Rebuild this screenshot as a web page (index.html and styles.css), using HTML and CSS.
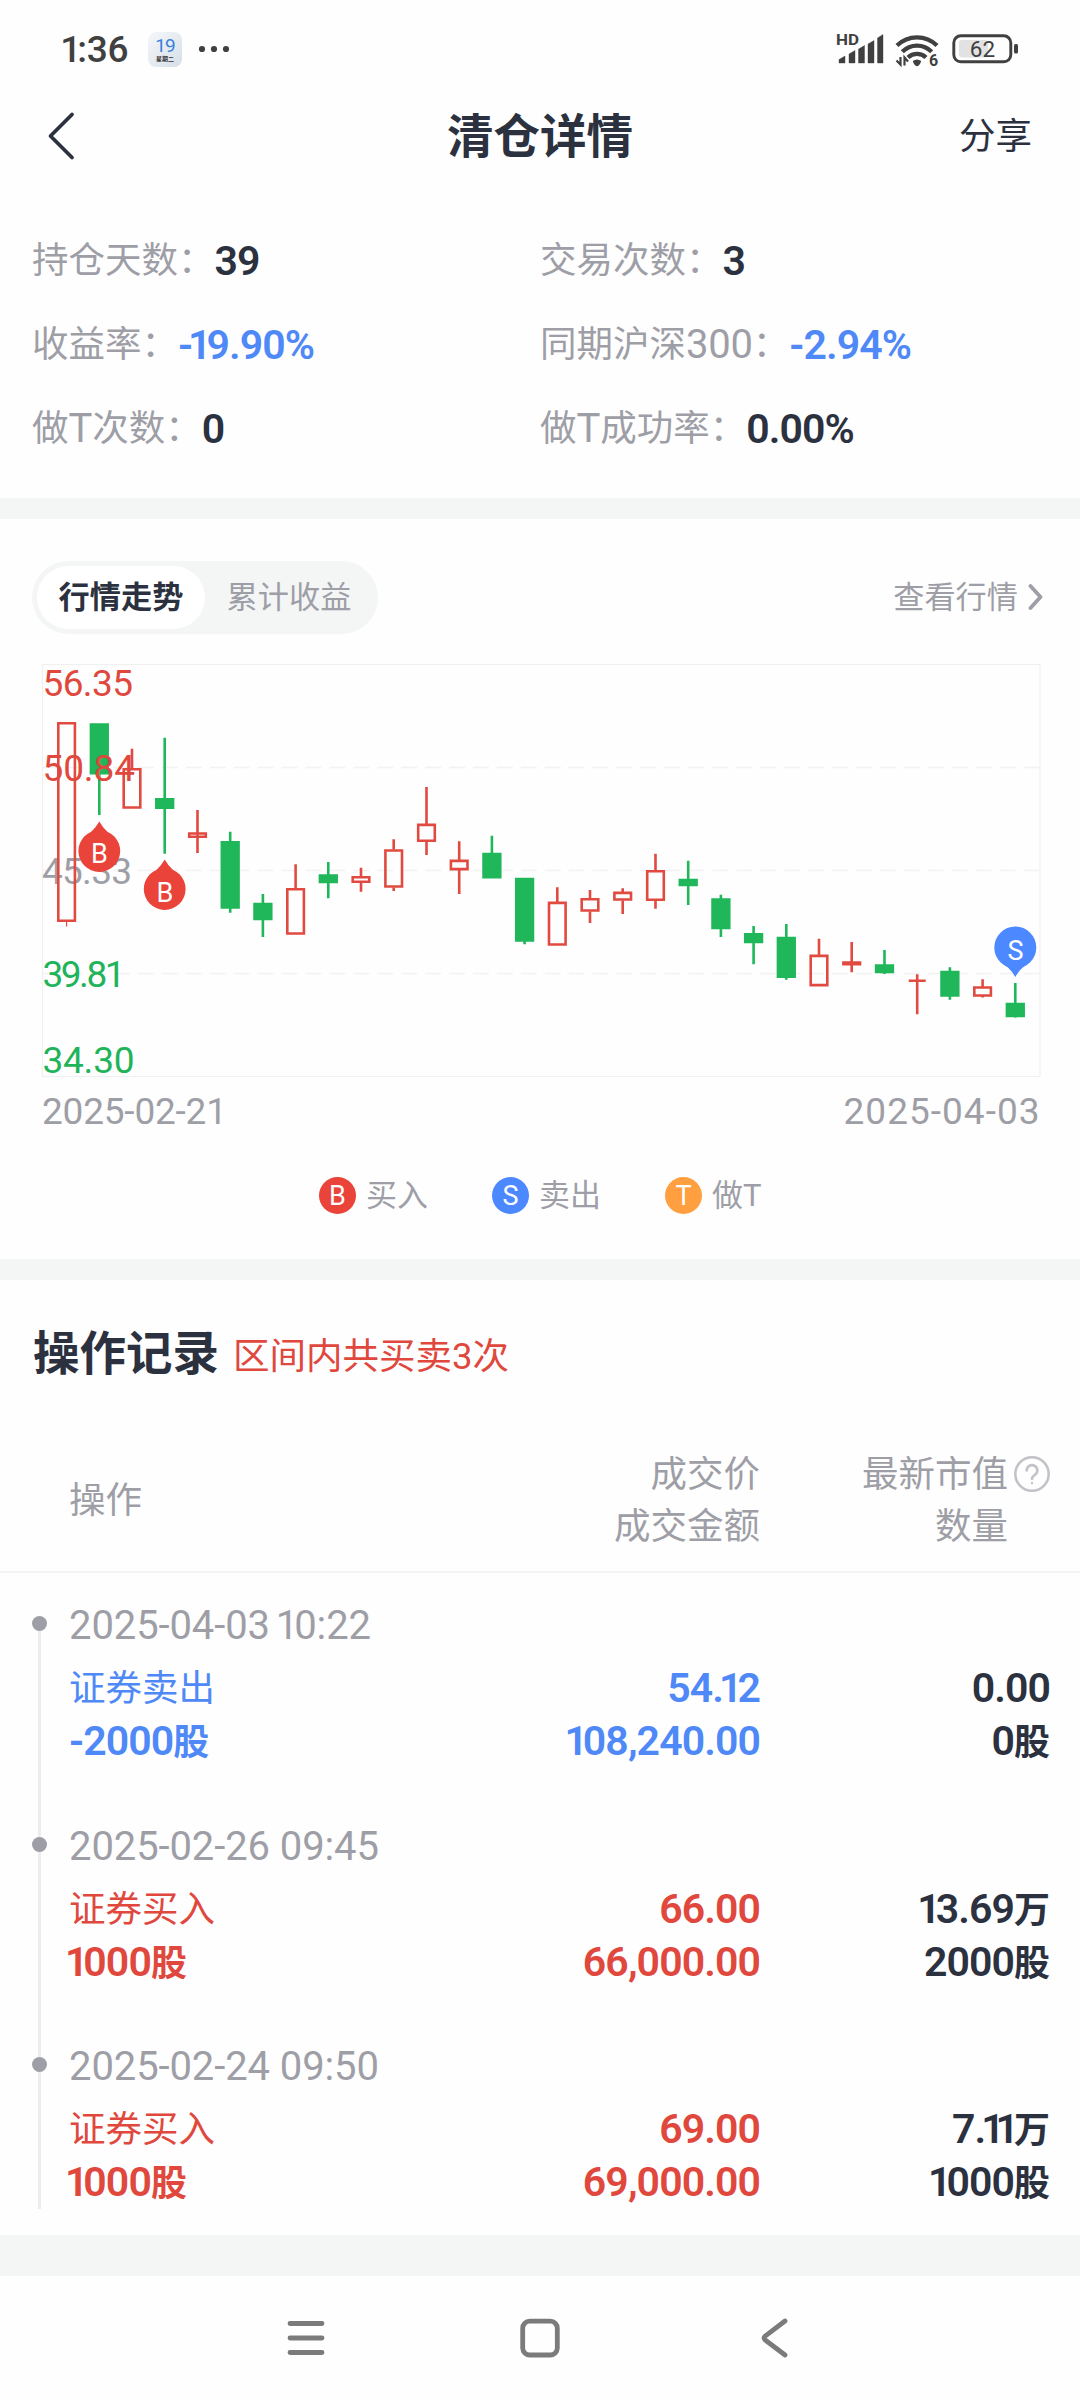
FILE: index.html
```html
<!DOCTYPE html>
<html lang="zh-CN">
<head>
<meta charset="utf-8">
<title>清仓详情</title>
<link rel="stylesheet" href="styles.css">
</head>
<body>
<div class="statusbar">
  <span class="clock"><span class="one">1</span>:36</span>
  <span class="cal"><b class="cal-day">19</b><i class="cal-week">星期二</i></span>
  <svg class="dots" width="32" height="8" viewBox="0 0 32 8"><circle cx="4" cy="4" r="3.1"/><circle cx="16" cy="4" r="3.1"/><circle cx="28" cy="4" r="3.1"/></svg>
  <svg class="sys" width="186" height="40" viewBox="834 30 186 40">
    <text x="836" y="46.3" font-size="15.500" font-weight="700" textLength="23" lengthAdjust="spacingAndGlyphs">HD</text>
    <path d="M839 64v-3.500l6-3.500v7zM849 64v-9l6-3.500v12.500zM858.500 64v-14l6-3.500v17.500zM868 64v-19l6-3.500v22.500zM877.500 64v-25l5.500-3.500v28.500z" stroke="#404040" stroke-width=".4" stroke-linejoin="round"/>
    <g fill="none" stroke="#404040" stroke-width="4.300">
      <path d="M897 46.500a28.500 28.500 0 0 1 40 0"/><path d="M902.300 52.800a20.500 20.500 0 0 1 29.400 0"/><path d="M908 58.500a13 13 0 0 1 18 0"/>
    </g>
    <path d="M912.800 62q4.200-3.200 8.400 0q-1.200 4.500-4.200 5.300q-3-.8-4.200-5.300z"/>
    <path d="M900.500 58v7.500l-4-4M904.500 66.500v-8l3.500 4" fill="none" stroke="#404040" stroke-width="2.200"/>
    <text x="929" y="66.500" font-size="16" font-weight="700">6</text>
    <rect x="953.800" y="36.800" width="57" height="26" rx="7" fill="none" stroke="#404040" stroke-width="2.900"/>
    <rect x="959" y="41" width="29" height="17.500" rx="3" fill="#e2e2e2"/>
    <rect x="1014" y="45" width="4" height="9.500" rx="1.500"/>
    <text x="982.500" y="57.500" font-size="22.500" text-anchor="middle">62</text>
  </svg>
</div>
<header class="titlebar">
  <svg class="back" width="30" height="50" viewBox="0 0 30 50"><path d="M27 3.500L5.500 25L27 46.500"/></svg>
  <h1>清仓详情</h1>
  <span class="share">分享</span>
</header>

<section class="stats">
  <div class="stat">持仓天数：<b>39</b></div>
  <div class="stat">交易次数：<b>3</b></div>
  <div class="stat">收益率：<b class="blue">-<span class="one">1</span>9.90%</b></div>
  <div class="stat">同期沪深<span class="n">300</span>：<b class="blue">-2.94%</b></div>
  <div class="stat">做<span class="n">T</span>次数：<b>0</b></div>
  <div class="stat">做<span class="n">T</span>成功率：<b>0.00%</b></div>
</section>

<section class="trend">
  <div class="trend-head">
    <div class="tabs"><span class="tab on">行情走势</span><span class="tab">累计收益</span></div>
    <a class="more">查看行情<svg width="16" height="28" viewBox="0 0 16 28"><path d="M2.500 3L12.500 14L2.500 25"/></svg></a>
  </div>
  <svg class="chart" width="1080" height="490" viewBox="0 650 1080 490">
    <rect x="42.500" y="664.500" width="997.500" height="412" fill="none" stroke="#f0f0f1" stroke-width="1.200"/>
    <path d="M42 767.500H1040M42 870.500H1040M42 973.500H1040" stroke="#f2f2f3" stroke-width="1.600" stroke-dasharray="16 7.940"/>
    <text class="gray" x="42" y="884" textLength="90">45.33</text>
    <g stroke="#1fb75a" fill="none">
      <path stroke-width="2.600" d="M99.300 774V815M164.700 737.700V853.700M230.200 831.700V912.700M262.900 894V937M328.300 862V898.300M491.900 835.700V870M524.600 930V944.300M688.200 860.700V905M720.900 894.700V937M753.600 926V964.300M786.300 924V979.700M884.500 950V974M949.900 967.300V999.700M1015.300 983V1017.600"/>
      <path stroke-width="19.300" d="M99.300 723.300V774.500M164.700 798V809M230.200 841V908.700M262.900 902.700V920.300M328.300 874.300V883.300M491.900 852.700V878.500M524.600 877.700V941.700M688.200 878.700V886.300M720.900 898.300V929.300M753.600 933V943.300M786.300 936.700V978M884.500 964.300V973.300M949.900 970.700V996.700M1015.300 1002.700V1017.300"/>
    </g>
    <g stroke="#e04a40" stroke-width="2.600" fill="none">
      <path d="M132 748.700V768M197.500 810V853M295.600 864.300V888M361 867.700V876M361 883V891.700M393.700 839.300V849.500M393.700 887.500V891M426.500 787V824M426.500 842V855M459.200 841.300V860M459.200 870V894M557.300 887.300V902M590 890V898M590 911.500V923M622.700 888.300V892M622.700 900.500V914M655.500 853.700V870M655.500 901V908.700M819 938.700V955M851.700 942V972.300M917.200 974.300V1014.300M908.700 980.700H925.700M982.600 979.300V987M982.600 996V997.500"/>
      <path stroke-width="1.200" d="M66.600 922V926.500"/>
      <path d="M58.300 723.200h16.600v197.600h-16.600zM123.700 769.200h16.600v38.300h-16.600zM189.200 833.500h16.600v3.300h-16.600zM287.300 889.200h16.600v44.300h-16.600zM352.700 877.200h16.600v4.600h-16.600zM385.400 850.500h16.600v36h-16.600zM418.200 824.900h16.600v15.900h-16.600zM450.900 860.900h16.600v8.200h-16.600zM549 902.900h16.600v41.600h-16.600zM581.700 899.200h16.600v11.300h-16.600zM614.400 892.900h16.600v6.600h-16.600zM647.200 871.200h16.600v28.600h-16.600zM810.700 955.900h16.600v29.200h-16.600zM843.400 962.500h16.600v1.600h-16.600zM974.300 987.500h16.600v8h-16.600z"/>
    </g>
    <text class="red" x="42.500" y="696" textLength="90.500">56.35</text>
    <text class="red" x="42.500" y="781" textLength="92.500">50.84</text>
    <text class="green" x="42.500" y="986.500" textLength="83">39.81</text>
    <text class="green" x="42.500" y="1073" textLength="92">34.30</text>
    <g fill="#ea4339">
      <circle cx="99.300" cy="851" r="20.900"/><path d="M99.300 821.500q3 5.500 8.700 11h-17.400q5.700-5.500 8.700-11z"/>
      <circle cx="164.700" cy="889" r="20.900"/><path d="M164.700 859.500q3 5.500 8.700 11h-17.400q5.700-5.500 8.700-11z"/>
    </g>
    <g fill="#4c88ff"><circle cx="1015.300" cy="947.500" r="21"/><path d="M1015.300 977q3-5.500 8.700-11h-17.400q5.700 5.500 8.700 11z"/></g>
    <text class="pin" x="99.500" y="863">B</text>
    <text class="pin" x="165" y="902">B</text>
    <text class="pin" x="1015.500" y="960">S</text>
    <text class="gray" x="42" y="1124" textLength="185">2025-02-21</text>
    <text class="gray" x="843.500" y="1124" textLength="196">2025-04-03</text>
  </svg>
  <div class="legend">
    <span class="key"><i class="dot buy">B</i>买入</span>
    <span class="key"><i class="dot sell">S</i>卖出</span>
    <span class="key"><i class="dot tt">T</i>做T</span>
  </div>
</section>

<section class="records">
  <div class="rec-title"><h2>操作记录</h2><span>区间内共买卖3次</span></div>
  <div class="thead">
    <div class="c1">操作</div>
    <div class="c2"><div>成交价</div><div>成交金额</div></div>
    <div class="c3 h3"><div>最新市值</div><div>数量</div>
      <svg class="help" width="38" height="38" viewBox="0 0 38 38"><circle cx="19" cy="19" r="16.700"/><path d="M13.700 15.500a5.300 5.300 0 1 1 8.300 4.300q-3 2-3 4.200"/><circle cx="19" cy="28" r="1.200" class="pt"/></svg></div>
  </div>
  <div class="timeline">
    <article class="rec">
      <time>2025-04-03 <span class="one">1</span>0:22</time>
      <div class="row"><div class="c1 blue"><div>证券卖出</div><b>-2000<i>股</i></b></div><div class="c2 blue"><b>54.<span class="one">1</span>2</b><b><span class="one">1</span>08,240.00</b></div><div class="c3"><b>0.00</b><b>0<i>股</i></b></div></div>
    </article>
    <article class="rec">
      <time>2025-02-26 09:45</time>
      <div class="row"><div class="c1 red"><div>证券买入</div><b><span class="one">1</span>000<i>股</i></b></div><div class="c2 red"><b>66.00</b><b>66,000.00</b></div><div class="c3"><b><span class="one">1</span>3.69<i>万</i></b><b>2000<i>股</i></b></div></div>
    </article>
    <article class="rec">
      <time>2025-02-24 09:50</time>
      <div class="row"><div class="c1 red"><div>证券买入</div><b><span class="one">1</span>000<i>股</i></b></div><div class="c2 red"><b>69.00</b><b>69,000.00</b></div><div class="c3"><b>7.<span class="one">1</span><span class="one">1</span><i>万</i></b><b><span class="one">1</span>000<i>股</i></b></div></div>
    </article>
  </div>
</section>

<nav class="sysnav">
  <svg width="40" height="44" viewBox="0 0 40 44"><path d="M4 7.500H36M4 22H36M4 36.500H36"/></svg>
  <svg width="44" height="44" viewBox="0 0 44 44"><rect x="4.700" y="5.200" width="34.600" height="33.800" rx="7"/></svg>
  <svg width="40" height="44" viewBox="0 0 40 44"><path d="M31 5L11.500 19.800Q8.500 22 11.500 24.200L31 39"/></svg>
</nav>
</body>
</html>
```
FILE: styles.css
```css
* { box-sizing: border-box; }
body {
  margin: 0; width: 1080px; height: 2400px; overflow: hidden;
  background: #fefefe; color: #2b313e;
  font-family: Roboto, "Noto Sans CJK SC", sans-serif;
  font-size: 36.500px; line-height: 52px;
  display: flex; flex-direction: column;
}
h1, h2 { margin: 0; font-weight: 700; font-size: 46.500px; }
b { font-weight: 600; font-size: 41px; letter-spacing: -.9px; }
i { font-style: normal; }
b i { font-size: 36px; letter-spacing: 0; }
.blue, .stat .blue { color: #4f89f7; }
.red { color: #e0483e; }
.n { font-size: 40px; letter-spacing: -.2px; }
/* narrower advance for the digit 1 */
.one { margin: 0 -.1em; }

.statusbar { height: 100px; display: flex; align-items: center; padding: 0 60px 2px 64px; color: #404040; fill: #404040; }
.clock { font-size: 37px; font-weight: 500; width: 84px; letter-spacing: -.3px; padding-top: 2px; }
.cal { width: 34px; height: 35px; border-radius: 8px; background: linear-gradient(135deg, #f6f8fa, #d6dee8); display: flex; flex-direction: column; align-items: center; }
.cal-day { font-size: 19px; line-height: 21px; font-weight: 400; color: #3b82dd; letter-spacing: -1px; margin-top: 3px; }
.cal-week { font-size: 6px; line-height: 6px; color: #333; font-weight: 700; }
.dots { margin-left: 16px; }
.sys { margin-left: auto; }

.titlebar { height: 72px; padding: 0 48px 0 45px; display: grid; grid-template-columns: 1fr auto 1fr; align-items: center; }
.titlebar h1 { padding: 2px 0 0 3px; }
.back { fill: none; stroke: #2b313e; stroke-width: 3.800; stroke-linecap: round; stroke-linejoin: round; }
.share { justify-self: end; padding-top: 2px; }

.stats { height: 326px; padding: 47px 0 0 32px; display: grid; grid-template-columns: 508px 1fr; grid-auto-rows: 84px; align-content: start; }
.stat { display: flex; align-items: center; color: #9e9ea7; }
.stat b { color: #2b313e; }

.trend { border-top: 21px solid #f4f6f6; height: 761px; padding-top: 42px; }
.trend-head { display: flex; justify-content: space-between; padding: 0 36px 0 32px; height: 73px; font-size: 31.200px; color: #9e9ea7; }
.tabs { display: flex; background: #f4f6f6; border-radius: 37px; padding: 5px; width: 346px; }
.tab { flex: 1; text-align: center; line-height: 64px; height: 63px; border-radius: 32px; }
.tab.on { background: #fff; color: #2b313e; font-weight: 600; }
.more { display: flex; align-items: center; gap: 10px; height: 73px; }
.more svg { fill: none; stroke: #9e9ea7; stroke-width: 3.800; stroke-linecap: round; stroke-linejoin: round; margin-bottom: 2px; }
.chart { display: block; margin-top: 16px; font-size: 37px; }
.chart .red { fill: #e0483e; }
.chart .green { fill: #1fb35a; }
.chart .gray { fill: #9e9ea7; }
.chart .pin { fill: #fff; font-size: 27px; text-anchor: middle; }
.legend { display: flex; height: 110px; padding-left: 319px; font-size: 31px; line-height: 54px; color: #9e9ea7; }
.key { display: flex; align-items: center; gap: 10px; width: 173px; height: 112px; }
.dot { width: 37px; height: 37px; border-radius: 50%; color: #fff; font-size: 27px; line-height: 38px; text-align: center; margin-bottom: 2px; }
.buy { background: #ea4339; }
.sell { background: #4c88ff; }
.tt { background: #ff9f40; }

.records { border-top: 21px solid #f4f6f6; height: 976px; }
.rec-title { display: flex; align-items: center; gap: 14px; padding: 41px 0 0 33px; height: 106px; }
.rec-title h2 { line-height: 64px; }
.rec-title span { color: #e0483e; padding-top: 7px; }
.thead { height: 187px; padding: 63px 30px 0 69px; border-bottom: 2px solid #f4f4f5; color: #9e9ea7; display: flex; align-items: flex-start; }
.c1 { width: 340px; }
.thead .c1 { padding-top: 26px; }
.c2 { width: 351px; text-align: right; }
.c3 { flex: 1; text-align: right; position: relative; }
.h3 { padding-right: 42px; }
.help { position: absolute; right: -1px; top: 6px; fill: none; stroke: #c2c2c8; stroke-width: 2.600; stroke-linecap: round; }
.help .pt { fill: #c2c2c8; stroke: none; }
.timeline { padding: 27px 30px 0 69px; background: linear-gradient(#ededf0, #ededf0) no-repeat 38px 50px / 3px 586px; }
.rec { height: 220.500px; position: relative; }
.rec::before { content: ""; position: absolute; left: -37px; top: 16px; width: 15px; height: 15px; border-radius: 50%; background: #9e9ea7; }
.rec time { display: block; font-size: 40px; letter-spacing: -.1px; color: #9e9ea7; }
.row { display: flex; padding-top: 10px; }
.row b { display: block; line-height: 53px; height: 53px; }
.row .c1 div { height: 53px; line-height: 53px; }

.sysnav { flex: 1; border-top: 41px solid #f4f6f6; display: flex; justify-content: center; gap: 192px; padding-top: 40px; fill: none; stroke: #7b7b7b; stroke-width: 4.800; stroke-linecap: round; }
```
